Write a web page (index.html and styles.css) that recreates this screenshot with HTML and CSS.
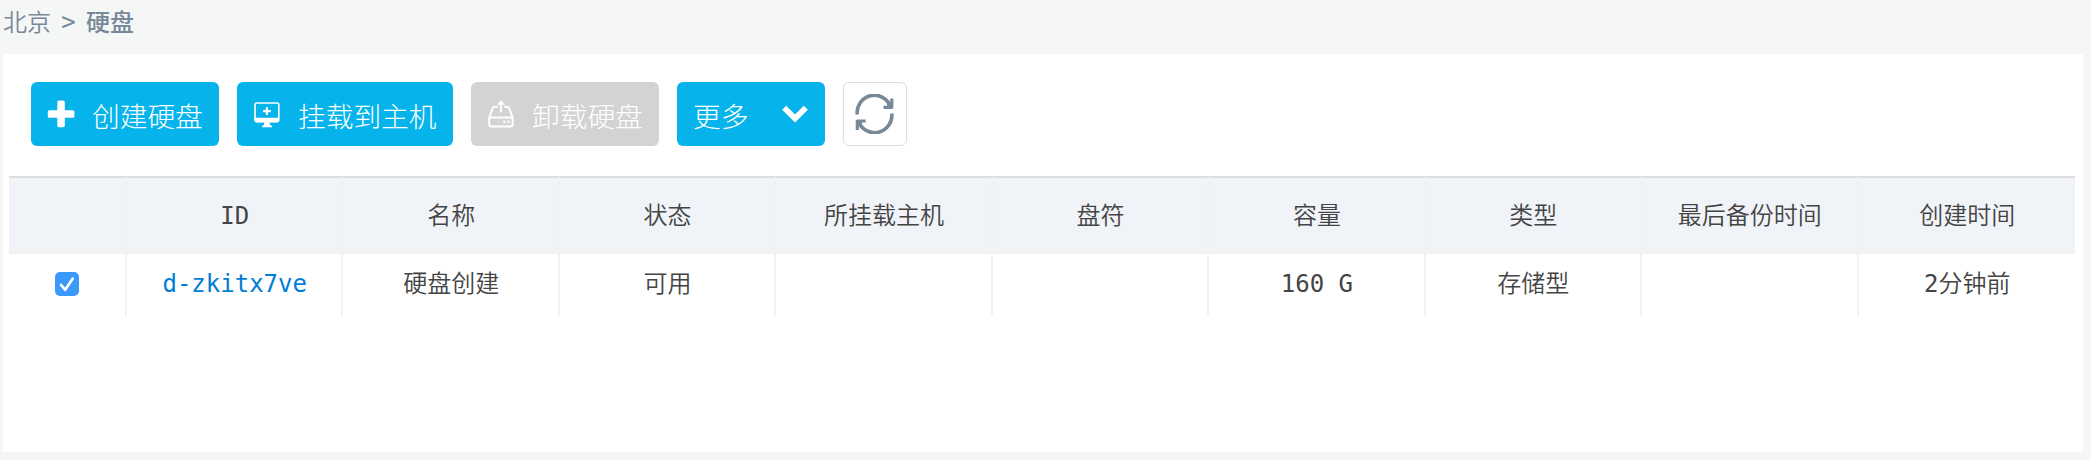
FILE: index.html
```html
<!DOCTYPE html>
<html lang="zh-CN">
<head>
<meta charset="utf-8">
<title>硬盘</title>
<link rel="stylesheet" href="styles.css">
</head>
<body>
<nav class="breadcrumb"><span>北京</span><span class="sep">&gt;</span><span class="current">硬盘</span></nav>
<main class="panel">
  <div class="toolbar">
    <button class="btn btn-create">
      <svg class="icon" viewBox="0 0 28 28"><rect x=".8" y="10.2" width="26.6" height="7.6" rx="1.6" fill="currentColor"/><rect x="10.3" y=".4" width="7.5" height="26.8" rx="1.6" fill="currentColor"/></svg>
      <span>创建硬盘</span>
    </button>
    <button class="btn btn-attach">
      <svg class="icon" viewBox="0 0 28 28"><g transform="translate(.8 .3)"><rect x="1.200" y="2.700" width="23.800" height="18.600" rx="1.600" fill="none" stroke="currentColor" stroke-width="1.600"/><path d="M1 17.500h24.200v3q0 1.500-1.500 1.500h-21q-1.700 0-1.700-1.500zM10.500 22h5.300l.5 2.600 2 1.100v1.300h-10v-1.300l1.800-1.100zM12 7h2.200v2.800H17V12h-2.800v2.800H12V12H9.200V9.800H12z" fill="currentColor"/></g></svg>
      <span>挂载到主机</span>
    </button>
    <button class="btn btn-detach" disabled>
      <svg class="icon" viewBox="0 0 28 28"><path d="M10.600 6.700H7.700q-1.500 0-2 1.400L2.200 17.500v7q0 2 2 2h19.400q2 0 2-2v-7L22.100 8.100q-.5-1.400-2-1.400h-2.900M2.200 19.300q0-1.800 2-1.800h19.400q2 0 2 1.800M13.900 12.500V3" fill="none" stroke="currentColor" stroke-width="1.900"/><path d="M13.900.2l4.100 4.600H9.800z" fill="currentColor"/><circle cx="17.300" cy="21.700" r="1.300" fill="currentColor"/><circle cx="21.500" cy="21.700" r="1.300" fill="currentColor"/></svg>
      <span>卸载硬盘</span>
    </button>
    <button class="btn btn-more">
      <span>更多</span>
      <svg class="chevron" viewBox="0 0 28 20"><path d="M3.200 3.800L14 14.500 24.800 3.800" fill="none" stroke="currentColor" stroke-width="5.800"/></svg>
    </button>
    <button class="btn-refresh" aria-label="刷新">
      <svg class="refresh" viewBox="0 0 40 40"><g fill="none" stroke="currentColor" stroke-width="3.600" stroke-linejoin="round"><path d="M2.300 20.500A17.200 17.200 0 0 1 35.500 12.500M36.700 19.500A17.200 17.200 0 0 1 3.500 27.500"/><path d="M28.500 13.300h8.300V4.500M10.700 27H2.300v9" stroke-width="3.200"/></g><path d="M32 10l5-1v4.500h-5zM2 27h5v3l-5 1z" fill="currentColor"/></svg>
    </button>
  </div>
  <table class="disks">
    <colgroup><col class="check-col"><col><col><col><col><col><col><col><col><col></colgroup>
    <thead>
      <tr><th></th><th>ID</th><th>名称</th><th>状态</th><th>所挂载主机</th><th>盘符</th><th>容量</th><th>类型</th><th>最后备份时间</th><th>创建时间</th></tr>
    </thead>
    <tbody>
      <tr>
        <td><span class="checkbox" role="checkbox" aria-checked="true"><svg viewBox="0 0 24 24"><path d="M6 12.800l4.200 5L17.800 6.500" fill="none" stroke="#fff" stroke-width="2.600" stroke-linecap="round" stroke-linejoin="round"/></svg></span></td>
        <td><a class="link">d-zkitx7ve</a></td><td>硬盘创建</td><td>可用</td><td></td><td></td><td>160 G</td><td>存储型</td><td></td><td>2分钟前</td>
      </tr>
    </tbody>
  </table>
</main>
</body>
</html>
```
FILE: styles.css
```css
* { box-sizing: border-box; }
body {
  margin: 0;
  height: 460px;
  overflow: hidden;
  background: #f5f7f7;
  color: #444;
  font: 350 24px "DejaVu Sans Mono", "Noto Sans CJK SC", sans-serif;
}
.breadcrumb {
  display: flex;
  align-items: center;
  height: 54px;
  padding: 0 0 13px 3px;
  color: #778899;
}
.breadcrumb .sep { width: 35px; padding-top: 3px; text-align: center; }
.breadcrumb .current { font-weight: 500; }
.panel {
  height: 398px;
  margin: 0 8px 0 3px;
  padding: 28px 8px 0 6px;
  background: #fff;
}
.toolbar {
  display: flex;
  gap: 18px;
  height: 64px;
  margin: 0 0 30px 22px;
}
.btn {
  display: flex;
  align-items: center;
  width: 188px;
  height: 64px;
  padding: 0 0 0 16px;
  border: 0;
  border-radius: 6px;
  background: #06b3eb;
  color: #fff;
  font: inherit;
  font-weight: 300;
  font-size: 27.7px;
  white-space: nowrap;
}
.btn span { padding-top: 1px; }
.icon { flex: none; width: 28px; height: 28px; margin-right: 17px; }
.btn-attach { width: 216px; }
.btn-detach { background: #d3d3d3; }
.btn-more { width: 148px; }
.chevron { width: 28px; height: 20px; margin-left: 33px; }
.btn-refresh {
  display: grid;
  place-items: center;
  width: 64px;
  height: 64px;
  padding: 0;
  border: 1px solid #ddd;
  border-radius: 6px;
  background: #fff;
  color: #778899;
}
.refresh { width: 40px; height: 40px; }
.disks {
  width: 2066px;
  table-layout: fixed;
  border-collapse: separate;
  border-spacing: 0;
}
.check-col { width: 118px; }
.disks th, .disks td {
  padding: 0;
  border-right: 2px solid #f2f2f2;
  text-align: center;
  vertical-align: middle;
  line-height: 36px;
  font-weight: inherit;
}
.disks th {
  height: 78px;
  padding-top: 4px;
  border-top: 2px solid #ddd;
  border-bottom: 4px solid #f2f2f2;
  background: #f0f3f8;
}
.disks td { height: 62px; padding-bottom: 2px; }
.disks th:not(:first-child), .disks td:not(:first-child) { padding-left: 1px; }
.disks th:last-child, .disks td:last-child { border-right: 0; }
.link { color: #007dd6; }
.checkbox {
  display: block;
  width: 24px;
  height: 24px;
  margin: 0 auto;
  border-radius: 5px;
  background: #3b99fc;
}
.checkbox svg { display: block; width: 24px; height: 24px; }
```
